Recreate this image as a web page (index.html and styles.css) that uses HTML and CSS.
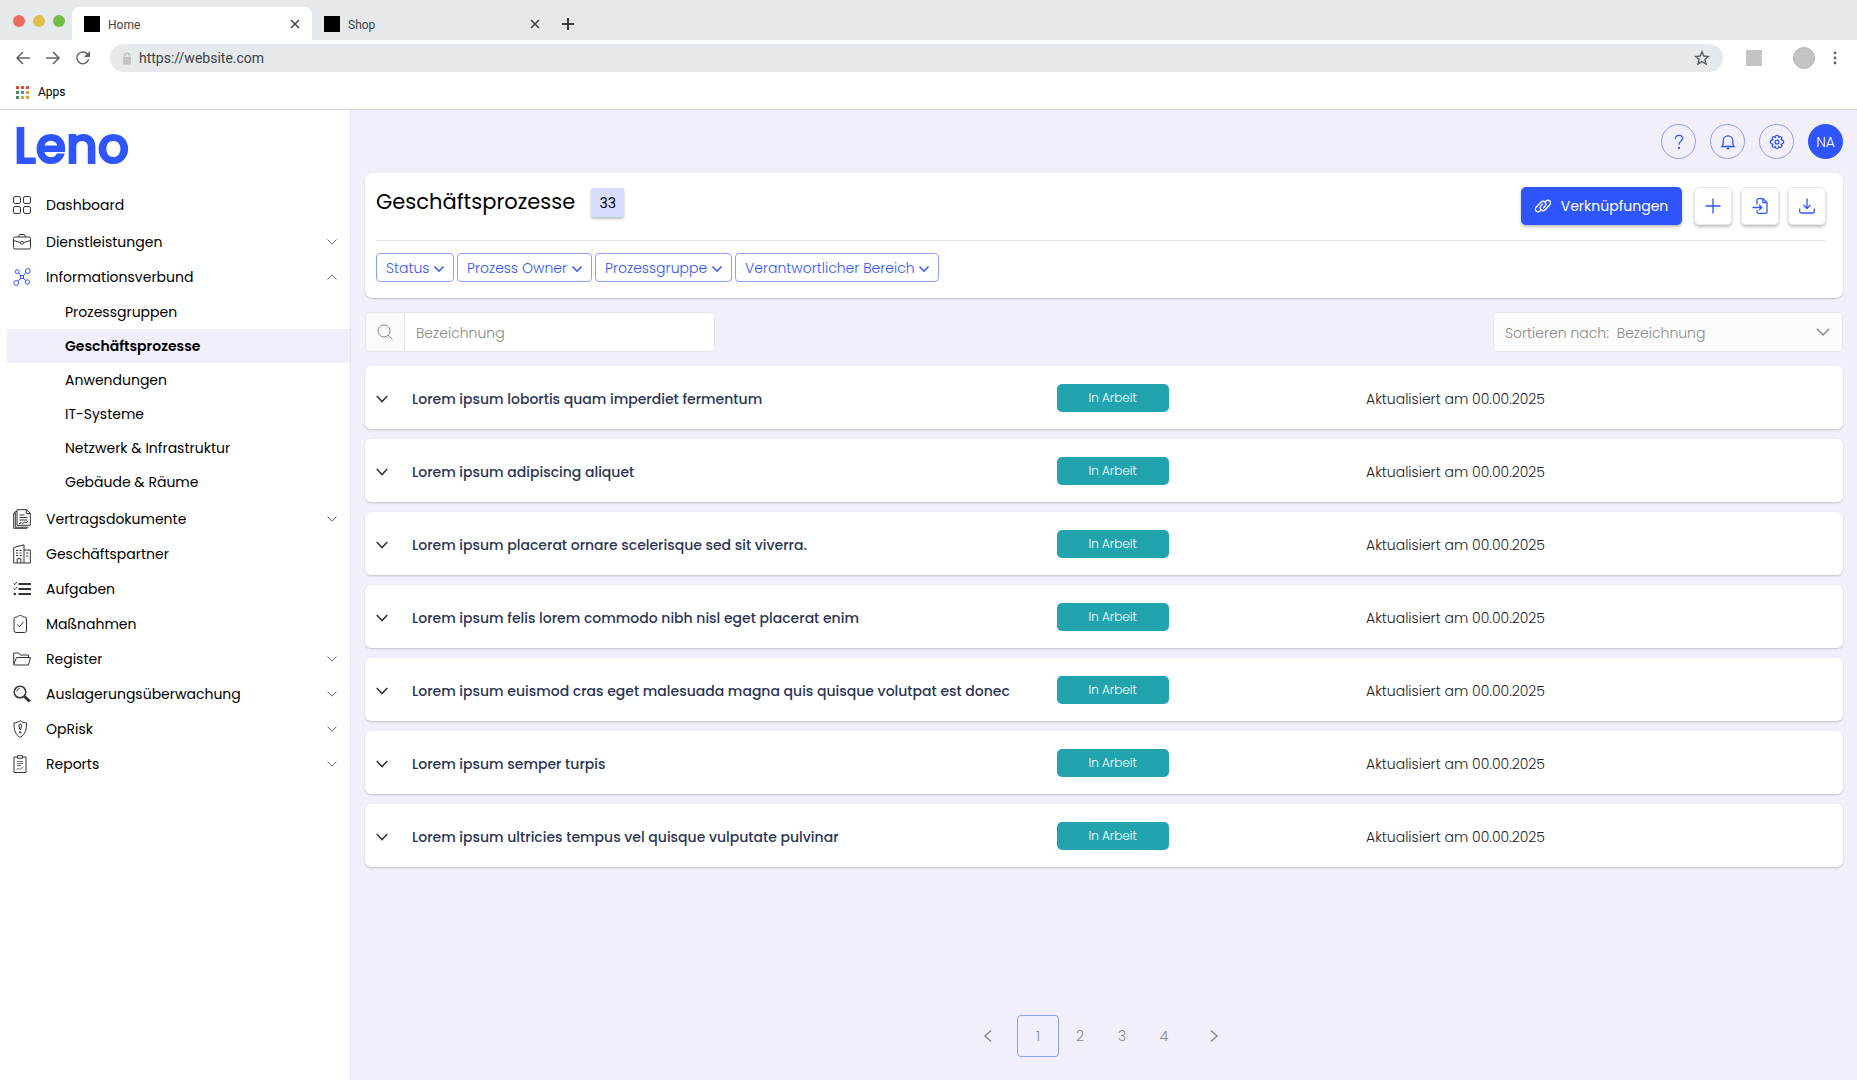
FILE: index.html
```html
<!doctype html>
<html lang="de">
<head>
<meta charset="UTF-8">
<title>Leno - Geschäftsprozesse</title>
<link rel="stylesheet" href="styles.css">
</head>

<body>
<!-- Symbole -->
<svg class="symbols" width="0" height="0">
	<symbol id="down" viewBox="0 0 12 12"><path d="M1.5 3.5 6 8.2l4.5-4.7"/></symbol>
	<symbol id="up" viewBox="0 0 12 12"><path d="M1.5 8.5 6 3.8l4.5 4.7"/></symbol>
	<symbol id="close" viewBox="0 0 12 12"><path d="m2 2 8 8M10 2l-8 8"/></symbol>
</svg>

<!-- Browserleiste -->
<header class="browser">
	<div class="tabs">
		<div class="lights"><i class="red"></i><i class="yellow"></i><i class="green"></i></div>
		<div class="tab on"><i class="favicon"></i><span>Home</span><button type="button" aria-label="Tab schließen"><svg width="12" height="12"><use href="#close"/></svg></button></div>
		<div class="tab"><i class="favicon"></i><span>Shop</span><button type="button" aria-label="Tab schließen"><svg width="12" height="12"><use href="#close"/></svg></button></div>
		<button class="new-tab" type="button" aria-label="Neuer Tab"><svg width="14" height="14" viewBox="0 0 14 14"><path d="M7 1v12M1 7h12"/></svg></button>
	</div>
	<div class="toolbar">
		<button type="button" aria-label="Zurück"><svg width="16" height="16" viewBox="0 0 16 16"><path d="M15 8H2M8 2 2 8l6 6"/></svg></button>
		<button type="button" aria-label="Vor"><svg width="16" height="16" viewBox="0 0 16 16"><path d="M1 8h13M8 2l6 6-6 6"/></svg></button>
		<button type="button" aria-label="Neu laden"><svg width="16" height="16" viewBox="0 0 16 16"><path d="M13.6 9.2A5.9 5.9 0 1 1 12.4 4l1.2 1.4"/><path class="solid" d="M15 1v6H9z"/></svg></button>
		<div class="address">
			<svg class="lock" width="10" height="13" viewBox="0 0 10 13"><path d="M2.5 6V3.5a2.5 2.5 0 0 1 5 0V6"/><rect x="1" y="5" width="8" height="7.5" rx="1"/></svg>
			<input type="text" value="https://website.com" aria-label="Adresse">
			<svg class="star" width="16" height="16" viewBox="0 0 16 16"><path d="m8 1.8 1.8 4.3 4.6.4-3.5 3 1.1 4.5L8 11.6 4 14l1.1-4.5-3.5-3 4.6-.4z"/></svg>
		</div>
		<i class="extension"></i>
		<i class="profile"></i>
		<button class="menu" type="button" aria-label="Menü"><svg width="4" height="14" viewBox="0 0 4 14"><circle cx="2" cy="2" r="1.4"/><circle cx="2" cy="7" r="1.4"/><circle cx="2" cy="12" r="1.4"/></svg></button>
	</div>
	<div class="bookmarks">
		<a href="#"><span class="apps"><i></i><i></i><i></i><i></i><i></i><i></i><i></i><i></i><i></i></span>Apps</a>
	</div>
</header>

<div class="app">
	<aside class="sidebar">
		<a class="logo" href="#">Leno</a>
		<nav>
			<ul class="nav">
				<li class="first"><a href="#"><svg viewBox="0 0 18 18"><rect x=".5" y=".5" width="7" height="7" rx="1.6"/><rect x="10.5" y=".5" width="7" height="7" rx="1.6"/><rect x=".5" y="10.5" width="7" height="7" rx="1.6"/><rect x="10.5" y="10.5" width="7" height="7" rx="1.6"/></svg><span>Dashboard</span></a></li>
				<li><a href="#"><svg viewBox="0 0 18 18"><rect x=".5" y="4" width="17" height="12" rx="1.5"/><path d="M5.5 4 6.500 1.500h5l1 2.500M.5 7.500l6.700 2M17.500 7.500l-6.700 2"/><circle cx="9" cy="9.800" r="1.500"/></svg><span>Dienstleistungen</span><svg class="arrow"><use href="#down"/></svg></a></li>
				<li><a href="#"><svg class="blue" viewBox="0 0 18 18"><circle cx="4.3" cy="3.6" r="2"/><circle cx="14.8" cy="3" r="2.4"/><circle cx="3.2" cy="15" r="2.4"/><circle cx="14.3" cy="14" r="2.2"/><rect x="7.5" y="7.5" width="3" height="3"/><path d="m5.8 5 2 2.5M13 4.8 10.5 7.5M7.5 10.5 5 13.200M10.5 10.5l2.200 2"/></svg><span>Informationsverbund</span><svg class="arrow"><use href="#up"/></svg></a>
					<ul class="sub">
						<li><a href="#">Prozessgruppen</a></li>
						<li class="on"><a href="#">Geschäftsprozesse</a></li>
						<li><a href="#">Anwendungen</a></li>
						<li><a href="#">IT-Systeme</a></li>
						<li><a href="#">Netzwerk &amp; Infrastruktur</a></li>
						<li><a href="#">Gebäude &amp; Räume</a></li>
					</ul>
				</li>
				<li><a href="#"><svg viewBox="0 0 18 20"><path d="M4 .7h9.500l3.800 3.600v12H4zM13.300.7v3.800h4M4 2.500H2.300v15.700h13M2.300 4H.7v15.300h13.500"/><path d="M6.500 6h5M6.500 8.500h8M6.500 11h8M6 14.500l2.500-.8.8.8 2.700-1.500 1 .8 2-1.500"/></svg><span>Vertragsdokumente</span><svg class="arrow"><use href="#down"/></svg></a></li>
				<li><a href="#"><svg viewBox="0 0 18 20"><path d="M.7 19V3.500L11 .8V19zM11 6h6.300v13H11M4.200 19v-4.300h3.600V19"/><path d="M3 6.500h2M6.500 6.500h2M3 9h2M6.500 9h2M3 11.500h2M6.500 11.500h2M13.200 9h2M13.200 12h2"/></svg><span>Geschäftspartner</span></a></li>
				<li><a href="#"><svg viewBox="0 0 18 18"><path class="bold" d="M5.500 4H18M5.500 9H18M5.500 14H18"/><path d="m.5 3.500 1.200 1.200L4 2M.5 8.500l1.200 1.200L4 7"/><circle class="solid" cx="1.800" cy="14" r="1.300"/></svg><span>Aufgaben</span></a></li>
				<li><a href="#"><svg viewBox="0 0 18 18"><path d="M4.500 2H3a2 2 0 0 0-2 2v11.500a2 2 0 0 0 2 2h8.500a2 2 0 0 0 2-2V4a2 2 0 0 0-2-2H10C9.700 1 8.500.5 7.300.5S4.900 1 4.500 2z"/><path d="m4.300 9.500 2.200 2.300 4-5"/></svg><span>Maßnahmen</span></a></li>
				<li><a href="#"><svg viewBox="0 0 18 18"><path d="M.7 14.500V3h5l1.500 2h8.300v2.500M.7 14.500 3.500 7.500h14l-2 7.500H1z"/></svg><span>Register</span><svg class="arrow"><use href="#down"/></svg></a></li>
				<li><a href="#"><svg viewBox="0 0 18 18"><circle class="ring" cx="7" cy="7" r="5.800"/><path d="M3.700 6.500a3.500 3.500 0 0 1 3-3"/><path class="thick" d="m11.500 11.500 5.300 5"/></svg><span>Auslagerungsüberwachung</span><svg class="arrow"><use href="#down"/></svg></a></li>
				<li><a href="#"><svg viewBox="0 0 18 18"><path d="M7.200.7c2 1.500 4 2 6.200 2.200.2 6-.8 11.500-6.200 14.400C1.800 14.400.8 8.900 1 2.900 3.200 2.700 5.200 2.200 7.200.7z"/><path d="M5.900 5.500a1.300 1.300 0 0 1 2.600 0l-.8 4h-1z"/><circle cx="7.200" cy="12.300" r=".8"/></svg><span>OpRisk</span><svg class="arrow"><use href="#down"/></svg></a></li>
				<li><a href="#"><svg viewBox="0 0 18 18"><path d="M4.500 2H1v15.500h12V2H9.500M4.500.7h5v2.600h-5z"/><path class="fine" d="M4 6.500h6M4 8.500h6M4 10.500h4M3.500 15l2-2 1.500 1.500 3.500-2.700"/></svg><span>Reports</span><svg class="arrow"><use href="#down"/></svg></a></li>
			</ul>
		</nav>
	</aside>

	<main class="main">
		<div class="user-bar">
			<button class="circle" type="button" aria-label="Hilfe"><svg width="16" height="16" viewBox="0 0 18 18"><path d="M5 5.500C5 3 6.700 1.600 9 1.600S13 3 13 5c0 3-4 3-4 7"/><circle class="solid" cx="9" cy="15.700" r="1.300"/></svg></button>
			<button class="circle" type="button" aria-label="Benachrichtigungen"><svg width="16" height="16" viewBox="0 0 16 16"><path d="M2 12.500h12c-1-1-1.300-2-1.300-6a4.700 4.700 0 0 0-9.400 0c0 4-.3 5-1.300 6zM6.500 14.500h3"/></svg></button>
			<button class="circle" type="button" aria-label="Einstellungen"><svg width="16" height="16" viewBox="0 0 16 16"><path d="M6.300 3.200Q6.500 1.300 8 1.300t1.700 1.900q1.500-1.200 2.600-.1t-.1 2.600Q14.700 6.300 14.700 8t-2.500 2.300q1.200 1.500.1 2.600t-2.600-.1Q9.500 14.700 8 14.700t-1.700-1.900q-1.500 1.200-2.600.1t.1-2.600Q1.300 9.700 1.300 8t2.500-2.300q-1.200-1.500-.1-2.600t2.600.1z"/><circle cx="8" cy="8" r="1.900"/></svg></button>
			<a class="avatar" href="#">NA</a>
		</div>

		<section class="card">
			<div class="head">
				<h1>Geschäftsprozesse</h1>
				<span class="count">33</span>
				<div class="actions">
					<button class="primary" type="button"><svg width="16" height="14" viewBox="0 0 16 14"><path d="M6.300 10.500 4.900 12a2.600 2.600 0 0 1-3.700-3.700l4.600-5a2.900 2.900 0 0 1 4.200 4L8.200 9.300"/><path d="M9.700 3.500 11.100 2a2.600 2.600 0 0 1 3.700 3.700l-4.600 5a2.900 2.900 0 0 1-4.200-4l1.800-2"/></svg>Verknüpfungen</button>
					<button class="square" type="button" aria-label="Hinzufügen"><svg width="16" height="16" viewBox="0 0 16 16"><path d="M8 .5v15M.5 8h15"/></svg></button>
					<button class="square" type="button" aria-label="Importieren"><svg width="16" height="16" viewBox="0 0 16 16"><path d="M5 6.500V2.200A1.500 1.500 0 0 1 6.500.7H11L15 4.500v9.300a1.500 1.500 0 0 1-1.500 1.500h-7A1.500 1.500 0 0 1 5 13.800V12M10.800.7v4H15M.5 9.500h9M7 6.800l2.700 2.700L7 12.200"/></svg></button>
					<button class="square" type="button" aria-label="Herunterladen"><svg width="16" height="16" viewBox="0 0 16 16"><path d="M8 .5v10M4.500 7 8 10.500 11.500 7M.7 10.500v3a1.500 1.500 0 0 0 1.500 1.500h11.600a1.500 1.500 0 0 0 1.500-1.500v-3"/></svg></button>
				</div>
			</div>
			<div class="filters">
				<label class="chip"><select aria-label="Status"><option>Status</option></select><svg width="12" height="12"><use href="#down"/></svg></label>
				<label class="chip"><select aria-label="Prozess Owner"><option>Prozess Owner</option></select><svg width="12" height="12"><use href="#down"/></svg></label>
				<label class="chip"><select aria-label="Prozessgruppe"><option>Prozessgruppe</option></select><svg width="12" height="12"><use href="#down"/></svg></label>
				<label class="chip"><select aria-label="Verantwortlicher Bereich"><option>Verantwortlicher Bereich</option></select><svg width="12" height="12"><use href="#down"/></svg></label>
			</div>
		</section>

		<div class="tools">
			<div class="search">
				<label for="search"><svg width="16" height="16" viewBox="0 0 16 16"><circle cx="7" cy="7" r="6"/><path d="m11.300 11.300 4 4"/></svg></label>
				<input id="search" type="text" placeholder="Bezeichnung" aria-label="Bezeichnung suchen">
			</div>
			<div class="sort">
				<label for="sort">Sortieren nach:</label>
				<select id="sort"><option>Bezeichnung</option></select>
				<svg width="16" height="16"><use href="#down"/></svg>
			</div>
		</div>

		<ul class="list">
			<li><button type="button" aria-label="Aufklappen"><svg width="14" height="14"><use href="#down"/></svg></button><div class="row"><h2>Lorem ipsum lobortis quam imperdiet fermentum</h2><span class="state">In Arbeit</span><span class="date">Aktualisiert am 00.00.2025</span></div></li>
			<li><button type="button" aria-label="Aufklappen"><svg width="14" height="14"><use href="#down"/></svg></button><div class="row"><h2>Lorem ipsum adipiscing aliquet</h2><span class="state">In Arbeit</span><span class="date">Aktualisiert am 00.00.2025</span></div></li>
			<li><button type="button" aria-label="Aufklappen"><svg width="14" height="14"><use href="#down"/></svg></button><div class="row"><h2>Lorem ipsum placerat ornare scelerisque sed sit viverra.</h2><span class="state">In Arbeit</span><span class="date">Aktualisiert am 00.00.2025</span></div></li>
			<li><button type="button" aria-label="Aufklappen"><svg width="14" height="14"><use href="#down"/></svg></button><div class="row"><h2>Lorem ipsum felis lorem commodo nibh nisl eget placerat enim</h2><span class="state">In Arbeit</span><span class="date">Aktualisiert am 00.00.2025</span></div></li>
			<li><button type="button" aria-label="Aufklappen"><svg width="14" height="14"><use href="#down"/></svg></button><div class="row"><h2>Lorem ipsum euismod cras eget malesuada magna quis quisque volutpat est donec</h2><span class="state">In Arbeit</span><span class="date">Aktualisiert am 00.00.2025</span></div></li>
			<li><button type="button" aria-label="Aufklappen"><svg width="14" height="14"><use href="#down"/></svg></button><div class="row"><h2>Lorem ipsum semper turpis</h2><span class="state">In Arbeit</span><span class="date">Aktualisiert am 00.00.2025</span></div></li>
			<li><button type="button" aria-label="Aufklappen"><svg width="14" height="14"><use href="#down"/></svg></button><div class="row"><h2>Lorem ipsum ultricies tempus vel quisque vulputate pulvinar</h2><span class="state">In Arbeit</span><span class="date">Aktualisiert am 00.00.2025</span></div></li>
		</ul>

		<nav class="pages" aria-label="Seiten">
			<a class="prev" href="#" aria-label="Zurück"><svg width="14" height="14" viewBox="0 0 14 14"><path d="M10 1.500 4 7l6 5.500"/></svg></a>
			<a class="on" href="#">1</a>
			<a href="#">2</a>
			<a href="#">3</a>
			<a href="#">4</a>
			<a class="next" href="#" aria-label="Weiter"><svg width="14" height="14" viewBox="0 0 14 14"><path d="m4 1.500 6 5.500-6 5.500"/></svg></a>
		</nav>
	</main>
</div>
</body>
</html>
```

FILE: styles.css
```css
*{ margin:0; padding:0; box-sizing:border-box; list-style:none; }
body{ min-height:100vh; display:flex; flex-direction:column; background:#f1effa; color:#000; font-family:Poppins, Inter, sans-serif; font-size:14px; line-height:20px; }
a{ color:inherit; text-decoration:none; }
button,input,select{ font:inherit; color:inherit; border:none; background:none; outline:none; }
button{ cursor:pointer; }
select{ appearance:none; cursor:pointer; }
svg{ display:block; flex:none; fill:none; stroke:currentColor; }
svg .solid{ fill:currentColor; stroke:none; }
.symbols{ position:absolute; }

/* Browser */
.browser{ background:#fff; border-bottom:1px solid #d0d2d4; font-family:Roboto, sans-serif; color:#3c4043; }
.tabs{ height:40px; display:flex; align-items:flex-end; background:#e5e9ec; }
.lights{ width:72px; height:38px; padding-left:13px; display:flex; align-items:center; gap:8px; }
.lights i{ width:12px; height:12px; border-radius:50%; }
.red{ background:#ed6a5e; }
.yellow{ background:#e0c04c; }
.green{ background:#72be47; }
.tab{ width:240px; height:33px; padding:0 11px 0 12px; display:flex; align-items:center; gap:8px; font-size:12px; }
.tab.on{ background:#fff; border-radius:8px 8px 0 0; }
.tab span{ flex:1; padding-top:2px; }
.tab svg{ stroke-width:1.5; }
.favicon{ width:16px; height:16px; background:#000; }
.new-tab{ height:33px; padding-left:9px; }
.new-tab svg{ stroke-width:2; }
.toolbar{ padding:4px 20px 4px 15px; display:flex; align-items:center; color:#5f6368; }
.toolbar button{ margin-right:14px; }
.toolbar svg{ stroke-width:1.5; }
.address{ flex:1; height:28px; margin:0 23px 0 5px; padding:0 13px 0 12px; display:flex; align-items:center; background:#e5e9ec; border-radius:14px; }
.address input{ flex:1; margin-left:7px; font-size:14px; color:#3c4043; }
.address .lock{ color:#c2c2c2; }
.lock rect{ fill:currentColor; stroke:none; }
.extension{ width:16px; height:16px; background:#c4c4c4; }
.profile{ width:22px; height:22px; margin:0 18px 0 31px; background:#c4c4c4; border:1px solid #b5b5b5; border-radius:50%; }
.toolbar .menu{ margin:0; }
.menu circle{ fill:currentColor; stroke:none; }
.bookmarks{ height:33px; padding:6px 16px 0; font-size:12px; color:#000; }
.bookmarks a{ display:flex; align-items:center; gap:9px; }
.apps{ display:grid; grid-template-columns:repeat(3, 3px); gap:2px; }
.apps i{ height:3px; background:#e0a030; }
.apps i:nth-child(-n+3){ background:#dd4b3e; }
.apps i:nth-child(3n+4){ background:#3f8f55; }
.apps i:nth-child(5){ background:#4285f4; }

/* Seitenleiste */
.app{ flex:1; display:flex; }
.sidebar{ width:350px; flex:none; padding-top:9px; background:#fff; }
.logo{ display:block; height:68px; padding-left:14px; font-size:49px; line-height:54px; font-weight:500; color:#2f55ff; -webkit-text-stroke:2px #2f55ff; }
.nav a{ display:flex; align-items:center; height:35px; padding:0 12px 0 13px; }
.nav .first{ margin-bottom:2px; }
.nav span{ flex:1; }
.nav svg{ width:18px; height:20px; margin-right:15px; color:#333; }
.nav svg.blue{ color:#2f55ff; }
.nav svg.arrow{ width:12px; height:12px; margin:0; color:#666; }
.nav .bold,.nav .ring{ stroke-width:2; }
.nav .ring{ stroke-width:1.5; }
.nav .thick{ stroke-width:3; }
.nav .fine{ stroke-width:.7; }
.nav .sub{ padding:1px 0 2px 7px; }
.sub a{ height:34px; padding:0 0 0 58px; }
.sub .on{ background:#f1effa; font-weight:600; }

/* Inhalt */
.main{ flex:1; min-width:0; padding:14px 14px 23px; display:flex; flex-direction:column; border-left:1px solid #e6e4f0; }
.user-bar{ display:flex; justify-content:flex-end; gap:14px; margin-bottom:14px; color:#2f55ff; }
.circle,.avatar{ width:35px; height:35px; display:flex; align-items:center; justify-content:center; border:1px solid #8a9fff; border-radius:50%; }
.circle svg,.actions svg{ stroke-width:1.3; }
.avatar{ background:#2f55ff; border-color:#2f55ff; color:#fff; font-weight:300; }
.card{ padding:14px 17px 16px 11px; background:#fff; border-radius:8px; box-shadow:0 1px 2px rgba(0,0,0,0.2); }
.head{ display:flex; align-items:flex-start; padding-bottom:15px; border-bottom:1px solid #e8e8e8; }
.head h1{ font-size:21px; line-height:30px; font-weight:400; }
.count{ width:33px; height:29px; margin:1px 0 0 16px; line-height:30px; text-align:center; background:#d6dcff; border-radius:2px; box-shadow:0 2px 3px rgba(0,0,0,0.25); }
.actions{ margin-left:auto; display:flex; gap:9px; color:#2f55ff; }
.primary,.square{ height:38px; display:flex; align-items:center; justify-content:center; border-radius:5px; box-shadow:0 2px 3px rgba(0,0,0,0.25); }
.primary{ width:161px; gap:10px; margin-right:3px; background:#2f55ff; color:#fff; }
.square{ width:38px; border:1px solid #e6e6e6; }
.filters{ display:flex; gap:3px; padding-top:12px; }
.chip{ position:relative; color:#2f55ff; font-weight:300; }
.chip select{ height:29px; padding:0 23px 0 9px; border:1px solid #8a9fff; border-radius:4px; }
.chip svg{ position:absolute; right:9px; top:10px; stroke-width:1.5; pointer-events:none; }
.tools{ display:flex; justify-content:space-between; margin:14px 0; color:#888; font-weight:300; }
.search,.sort{ width:350px; height:40px; display:flex; align-items:center; background:#fff; border:1px solid #e6e6e6; border-radius:4px; }
.search label{ width:39px; height:38px; display:flex; align-items:center; justify-content:center; background:#f9fafc; border-right:1px solid #e6e6e6; border-radius:4px 0 0 4px; }
.search input{ flex:1; min-width:0; height:38px; padding:2px 11px 0; }
.search input::placeholder{ color:#888; opacity:1; }
.sort{ padding:0 11px; background:#fcfcfc; }
.sort label,.sort select{ padding-top:2px; }
.sort select{ flex:1; height:38px; padding-left:8px; }
.list{ display:flex; flex-direction:column; gap:10px; }
.list li{ height:63px; display:flex; background:#fff; border-radius:6px; box-shadow:0 1px 2px rgba(0,0,0,0.2); }
.list button{ width:47px; padding:3px 0 0 10px; color:#333; }
.list svg{ stroke-width:1.3; }
.row{ flex:1; display:grid; grid-template-columns:50fr 24fr 37fr; align-items:center; }
.row h2{ padding-top:3px; font-size:14px; font-weight:500; color:#2b3556; white-space:nowrap; }
.state{ width:112px; height:28px; line-height:28px; text-align:center; font-size:12px; font-weight:300; color:#fff; background:#22a4af; border-radius:5px; }
.date{ padding-top:3px; font-weight:300; color:#222; }
.pages{ display:flex; justify-content:center; margin-top:auto; padding:20px 6px 0 0; color:#888; font-weight:300; }
.pages a{ width:42px; height:42px; display:flex; align-items:center; justify-content:center; border:1px solid transparent; border-radius:4px; }
.pages svg{ stroke-width:1.5; }
.pages .on{ border-color:#8a9fff; }
.pages .prev{ margin-right:8px; }
.pages .next{ margin-left:8px; }
```
